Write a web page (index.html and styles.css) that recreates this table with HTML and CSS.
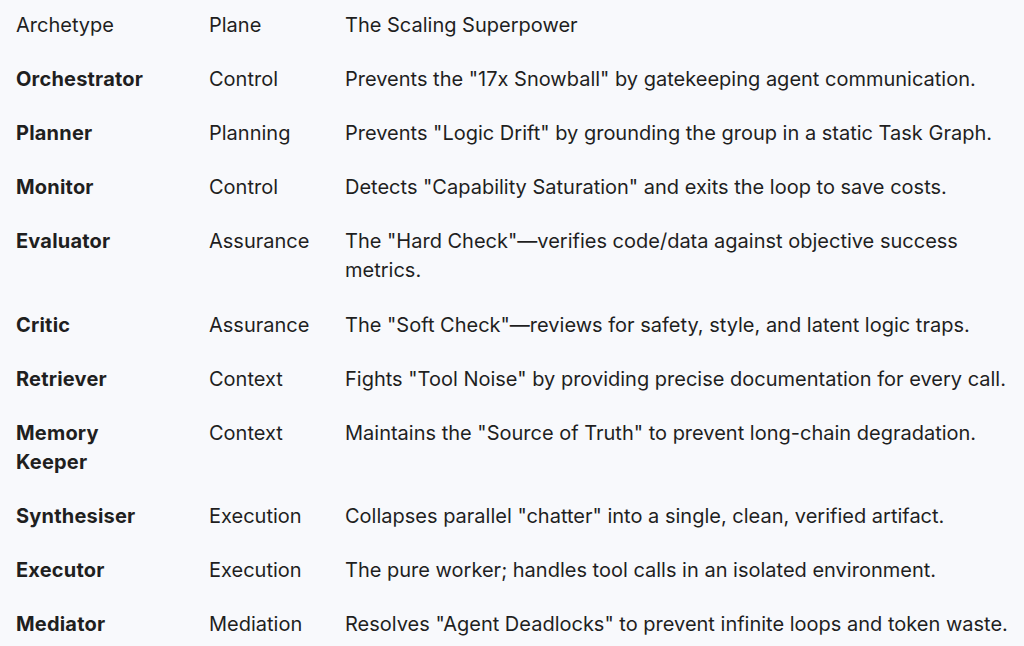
FILE: index.html
```html
<!DOCTYPE html>
<html>
<head>
<meta charset="utf-8">
<link rel="stylesheet" href="styles.css">
</head>
<body>
<div class="table">
  <div class="row head"><div class="c1">Archetype</div><div class="c2">Plane</div><div class="c3">The Scaling Superpower</div></div>
  <div class="row"><div class="c1 b">Orchestrator</div><div class="c2">Control</div><div class="c3">Prevents the "17x Snowball" by gatekeeping agent communication.</div></div>
  <div class="row"><div class="c1 b">Planner</div><div class="c2">Planning</div><div class="c3">Prevents "Logic Drift" by grounding the group in a static Task Graph.</div></div>
  <div class="row"><div class="c1 b">Monitor</div><div class="c2">Control</div><div class="c3">Detects "Capability Saturation" and exits the loop to save costs.</div></div>
  <div class="row"><div class="c1 b">Evaluator</div><div class="c2">Assurance</div><div class="c3">The "Hard Check"—verifies code/data against objective success metrics.</div></div>
  <div class="row"><div class="c1 b">Critic</div><div class="c2">Assurance</div><div class="c3">The "Soft Check"—reviews for safety, style, and latent logic traps.</div></div>
  <div class="row"><div class="c1 b">Retriever</div><div class="c2">Context</div><div class="c3">Fights "Tool Noise" by providing precise documentation for every call.</div></div>
  <div class="row"><div class="c1 b">Memory Keeper</div><div class="c2">Context</div><div class="c3">Maintains the "Source of Truth" to prevent long-chain degradation.</div></div>
  <div class="row"><div class="c1 b">Synthesiser</div><div class="c2">Execution</div><div class="c3">Collapses parallel "chatter" into a single, clean, verified artifact.</div></div>
  <div class="row"><div class="c1 b">Executor</div><div class="c2">Execution</div><div class="c3">The pure worker; handles tool calls in an isolated environment.</div></div>
  <div class="row"><div class="c1 b">Mediator</div><div class="c2">Mediation</div><div class="c3">Resolves "Agent Deadlocks" to prevent infinite loops and token waste.</div></div>
</div>
</body>
</html>
```
FILE: styles.css
```css
html, body {
  margin: 0;
  padding: 0;
  background: #f8f9fc;
}
body {
  font-family: Inter, "Noto Sans", sans-serif;
  font-size: 20px;
  line-height: 29px;
  color: #1f1f1f;
}
.table {
  display: flex;
  flex-direction: column;
  padding: 0 6px 0 16px;
  margin-top: -2px;
}
.row {
  display: grid;
  grid-template-columns: 193px 136px 1fr;
  padding: 12.6px 0;
}
.c1 {
  padding-right: 50px;
}
.b {
  font-weight: 700;
  letter-spacing: 0.2px;
}
```
